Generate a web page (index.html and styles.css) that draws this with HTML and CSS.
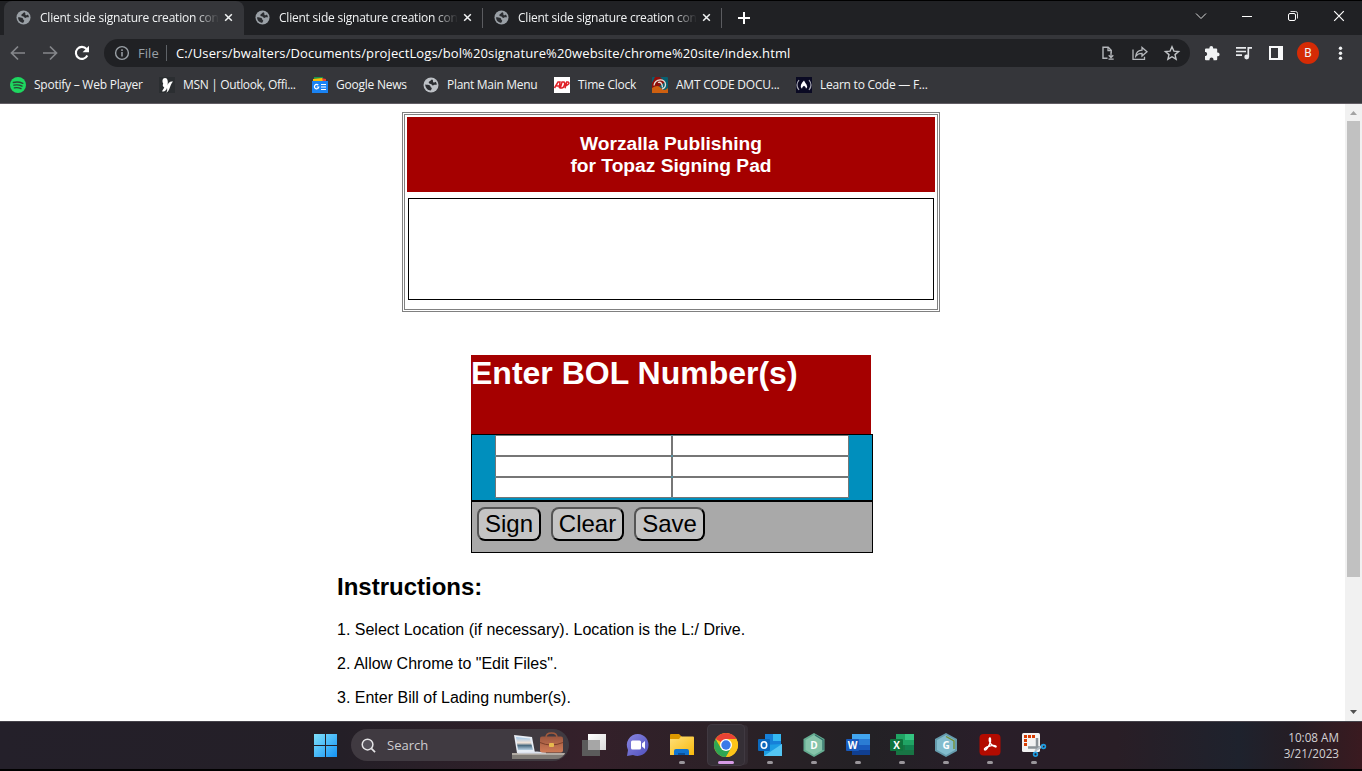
FILE: index.html
```html
<!DOCTYPE html>
<html lang="en">
<head>
<meta charset="utf-8">
<title>Client side signature creation</title>
<link rel="stylesheet" href="styles.css">
</head>
<body>
<svg class="defs" width="0" height="0">
  <defs>
    <symbol id="globe" viewBox="0 0 16 16"><circle cx="8" cy="8" r="7.500" fill="currentColor"/><path d="M9.200 2.400C7.800 2.600 7.700 3.800 6.600 4.300 5.300 4.900 5.400 6.500 6.900 6.700c1.500.1 1.700.9 2.400 1.600 1 .7 1.700-.5 2.800-.5.800 0 1.200.2 1.700-.2-.1-1.200-.5-2-1.100-2.800-.8.800-1.900 1-2.500.4-.7-.8.500-1.500-1-2.800zM2.200 7.600c1.700.2 3.700.2 4.700 1 .9.800.4 1.700 1.300 2 1.100.4.500 1.700-.5 2.900C4.700 13.400 2.300 11 2.200 7.600z" fill="#2b2d31"/></symbol>
    <symbol id="close" viewBox="0 0 10 10"><path d="M1.300 1.300l7.400 7.400M8.700 1.300L1.300 8.700" stroke="#f1f3f4" stroke-width="1.700"/></symbol>
    <linearGradient id="win" x1="0" y1="0" x2="1" y2="1"><stop offset="0" stop-color="#7fe0fb"/><stop offset="1" stop-color="#1493f5"/></linearGradient>
    <linearGradient id="folder" x1="0" y1="0" x2="1" y2="1"><stop offset="0" stop-color="#ffe07a"/><stop offset="1" stop-color="#f9b90c"/></linearGradient>
    <linearGradient id="chat" x1="0" y1="0" x2="1" y2="1"><stop offset="0" stop-color="#8a86e0"/><stop offset="1" stop-color="#4f50bd"/></linearGradient>
    <linearGradient id="bag" x1="0" y1="0" x2="0" y2="1"><stop offset="0" stop-color="#9c563e"/><stop offset="1" stop-color="#d07b57"/></linearGradient>
    <linearGradient id="screen" x1="0" y1="0" x2="0" y2="1"><stop offset="0" stop-color="#9ec5e8"/><stop offset=".45" stop-color="#f2e3d8"/><stop offset=".65" stop-color="#4a6a80"/><stop offset="1" stop-color="#b7d0e4"/></linearGradient>
    <linearGradient id="pane" x1="0" y1="0" x2="1" y2="1"><stop offset="0" stop-color="#fff"/><stop offset="1" stop-color="#dadada"/></linearGradient>
  </defs>
</svg>

<header class="browser">
  <div class="tabstrip">
    <div class="tab active"><svg class="fav"><use href="#globe"/></svg><span class="title">Client side signature creation con</span><svg class="x"><use href="#close"/></svg></div>
    <div class="tab"><svg class="fav"><use href="#globe"/></svg><span class="title">Client side signature creation con</span><svg class="x"><use href="#close"/></svg></div>
    <div class="tab"><svg class="fav"><use href="#globe"/></svg><span class="title">Client side signature creation con</span><svg class="x"><use href="#close"/></svg></div>
    <svg class="plus" viewBox="0 0 12 12"><path d="M6 0v12M0 6h12" stroke="#fff" stroke-width="2"/></svg>
    <div class="winctl">
      <svg viewBox="0 0 12 12"><path d="M1 3.500l5 5 5-5" fill="none" stroke="#ddd"/></svg>
      <svg viewBox="0 0 12 12"><path d="M1 6.500h10" stroke="#fff"/></svg>
      <svg viewBox="0 0 12 12"><rect x="1.500" y="3.500" width="7" height="7" rx="1.500" fill="none" stroke="#fff"/><path d="M3.500 1.500h5a2 2 0 0 1 2 2v5" fill="none" stroke="#ddd"/></svg>
      <svg viewBox="0 0 12 12"><path d="M1.200 1.200l9.600 9.600M10.800 1.200L1.200 10.800" stroke="#fff" stroke-width="1.200"/></svg>
    </div>
  </div>

  <div class="toolbar">
    <div class="nav">
      <svg viewBox="0 0 16 16"><path d="M15 8H2M8 1.500L1.500 8 8 14.500" fill="none" stroke="#85878b" stroke-width="1.700"/></svg>
      <svg viewBox="0 0 16 16"><path d="M1 8h13M8 1.500L14.500 8 8 14.500" fill="none" stroke="#85878b" stroke-width="1.700"/></svg>
      <svg viewBox="0 0 16 16"><path d="M13.300 10.500A6 6 0 1 1 12.500 4" fill="none" stroke="#fff" stroke-width="2.100"/><path d="M15 .8v6.400H8.600z" fill="#fff"/></svg>
    </div>
    <div class="omnibox">
      <svg class="info" viewBox="0 0 16 16"><circle cx="8" cy="8" r="6.400" fill="none" stroke="#9aa0a6" stroke-width="1.400"/><path d="M8 7v4.500M8 4.300V6" stroke="#9aa0a6" stroke-width="1.500"/></svg>
      <span class="scheme">File</span><i class="bar"></i>
      <span class="url">C:/Users/bwalters/Documents/projectLogs/bol%20signature%20website/chrome%20site/index.html</span>
      <div class="actions">
        <svg viewBox="0 0 16 16"><path d="M7.500 13.300H3V2.300h5.200l3 3v3" fill="none" stroke="#b5b8bc" stroke-width="1.400"/><path d="M8 2v3.600h3.500M11 7.500v4.200M8.700 10.200l2.300 2.300 2.300-2.300M8.500 14.200h5.200" fill="none" stroke="#b5b8bc" stroke-width="1.300"/></svg>
        <svg viewBox="0 0 16 16"><path d="M1 4.500v9.800h11.500v-2.500M10 2.500v2.600C6 5.300 4.200 7.300 3.800 11c1.500-2 3.300-2.700 6.200-2.700V11l5-4.300z" fill="none" stroke="#b5b8bc" stroke-width="1.300"/></svg>
        <svg viewBox="0 0 16 16"><path d="M8 1.800l1.900 4.300 4.700.4-3.600 3.100 1.100 4.600L8 11.700l-4.100 2.500L5 9.600 1.400 6.500l4.700-.4z" fill="none" stroke="#c1c4c7" stroke-width="1.400"/></svg>
      </div>
    </div>
    <div class="tools">
      <svg viewBox="0 0 16 16"><path d="M1 4.500Q1 3.500 2 3.500h3.400v-.6a1.900 1.900 0 0 1 3.800 0v.6h3q1 0 1 1V7.500h.5a1.900 1.900 0 0 1 0 3.800h-.5v2.900q0 1-1 1H9.500v-.8a2 2 0 0 0-4 0v.8H2q-1 0-1-1v-3.300h.8a2 2 0 0 0 0-3.800H1z" fill="#f1f3f4"/></svg>
      <svg viewBox="0 0 16 16"><path d="M0 2.800h10M0 6.500h10M0 10.200h6M12.300 12V2.800H16" fill="none" stroke="#e8eaed" stroke-width="1.700"/><circle cx="10.700" cy="12" r="2.400" fill="#e8eaed"/></svg>
      <svg viewBox="0 0 16 16"><path d="M1 1h14v14H1zM3 3v10h7V3z" fill="#f8f9fa" fill-rule="evenodd"/></svg>
      <span class="avatar">B</span>
      <svg viewBox="0 0 16 16" fill="#f1f3f4"><circle cx="8.500" cy="3.200" r="1.700"/><circle cx="8.500" cy="8.200" r="1.700"/><circle cx="8.500" cy="13.200" r="1.700"/></svg>
    </div>
  </div>

  <nav class="bookmarks">
    <a><svg viewBox="0 0 16 16"><circle cx="8" cy="8" r="8" fill="#1ed760"/><path d="M3.300 5.500q5-1.300 9.500.9M3.800 8.200q4.300-1.100 8.200.9M4.300 10.800q3.700-.8 6.700.8" fill="none" stroke="#2b4735" stroke-width="1.300" stroke-linecap="round"/></svg><span>Spotify – Web Player</span></a>
    <a><svg viewBox="0 0 16 16"><path d="M0 0h16v16H0z" fill="#2b2e31"/><path d="M8.500 8.500C9.400 4 8.600.8 6 .9 3.200 1 3 4 4.200 6.500c-1 2.200-.2 3.300 1.100 3.900L3 14.300c2.200.9 4.300-.6 5-3.300.2 1.500.5 3-.8 4.600 3.600-.6 3.300-7 6.800-11-3-.7-5.100 1.500-5.500 3.900z" fill="#fff"/></svg><span>MSN | Outlook, Offi...</span></a>
    <a><svg viewBox="0 0 16 16"><path d="M2 0h9v4H2z" fill="#18944b"/><path d="M9 1l5 1v3H8z" fill="#e94235"/><path d="M1 2l9-1 1 4H1z" fill="#fbbc04"/><path d="M0 4h16v12H0z" fill="#1a83f3"/><path d="M6.300 8.200A2.200 2.200 0 1 0 6.800 10H4.700" fill="none" stroke="#fff" stroke-width="1.200"/><path d="M9 7h5v1H9zM9 9.500h5v1H9zM9 12h5v1H9z" fill="#fff"/></svg><span>Google News</span></a>
    <a class="plain"><svg><use href="#globe"/></svg><span>Plant Main Menu</span></a>
    <a><svg viewBox="0 0 16 16"><path d="M0 0h16v16H0z" fill="#fff"/><path d="M.5 11L4 5h2l-.7 6M2.500 9H5M6.300 11L8 5h1.800q1.500.7.700 3-.8 2.800-2.500 3zM11 11.200L12.700 5h1.500q2.300 1.600-1.900 3.600" fill="none" stroke="#e02127" stroke-width="1.500"/></svg><span>Time Clock</span></a>
    <a><svg viewBox="0 0 16 16"><rect width="16" height="16" rx="1" fill="#075f70"/><path d="M0 6l3-6h5l5 5-8 6H0z" fill="#8d100b"/><path d="M0 11q6-4 9 0t7 0v5H0z" fill="#ce6010"/><path d="M2 8.500C3 1.500 13.500 1 13.500 7.500q0 3.500-3.500 4.500M6 5.500q4-1.500 4.500 5" fill="none" stroke="#e7ddd3" stroke-width="1.300"/></svg><span>AMT CODE DOCU...</span></a>
    <a><svg viewBox="0 0 16 16"><path d="M0 0h16v16H0z" fill="#0a0a23"/><path d="M3 3Q-1 8 3 13M13 3q4 5 0 10" fill="none" stroke="#aaaab5" stroke-width="1.200"/><path d="M8 3.500q1 2 2.500 4T10 11.800q0-2-2-3-2 1-2 3-2-1.500-1-4t3-4.300z" fill="#fff"/></svg><span>Learn to Code — F...</span></a>
  </nav>
</header>

<div class="viewport">
  <main class="page">
    <section class="pad">
      <h3>Worzalla Publishing<br>for Topaz Signing Pad</h3>
      <div class="canvas"></div>
    </section>
    <section class="bol">
      <h1>Enter BOL Number(s)</h1>
      <div class="fields"><input><input><input><input><input><input></div>
      <div class="buttons"><button>Sign</button><button>Clear</button><button>Save</button></div>
    </section>
    <section class="instructions">
      <h2>Instructions:</h2>
      <p>1. Select Location (if necessary). Location is the L:/ Drive.</p>
      <p>2. Allow Chrome to "Edit Files".</p>
      <p>3. Enter Bill of Lading number(s).</p>
    </section>
  </main>
  <div class="scrollbar">
    <svg viewBox="0 0 17 17"><path d="M5 11h7L8.500 7z" fill="#a3a3a3"/></svg>
    <div class="thumb"></div>
    <svg class="down" viewBox="0 0 17 17"><path d="M5 6h7L8.500 10z" fill="#505050"/></svg>
  </div>
</div>

<footer class="taskbar">
  <svg class="start" viewBox="0 0 23 23"><path d="M0 0h11v11H0zM12 0h11v11H12zM0 12h11v11H0zM12 12h11v11H12z" fill="url(#win)"/></svg>
  <div class="search">
    <svg class="glass" viewBox="0 0 16 16"><circle cx="7" cy="7" r="5.700" fill="#55515a" stroke="#e4e4e6" stroke-width="1.600"/><path d="M11 11l4 4" stroke="#e4e4e6" stroke-width="1.800"/></svg>
    <span>Search</span>
    <svg class="desk" viewBox="0 0 54 31"><path d="M0 20h53q-3 6-9 6H0z" fill="#807b76"/><path d="M0 20h53l-1 2H0z" fill="#b1aaa3"/><path d="M2 2l18 2 3 16H5z" fill="#e8edf5"/><path d="M4 4l14 1.500L21 17H6z" fill="url(#screen)"/><path d="M5 19.500l20-1 9 1v1H6z" fill="#dce1ed"/><path d="M34 4.500q0-4.500 5.500-4.500T45 4.500" fill="none" stroke="#a15a3d" stroke-width="1.500"/><rect x="28" y="3.500" width="23" height="16" rx="2" fill="url(#bag)"/><path d="M28 9.500q11 5 23 0" fill="none" stroke="#7c3f2a"/><rect x="37" y="10" width="5" height="4" rx="1" fill="#e6b94e"/></svg>
  </div>
  <div class="apps">
    <div class="app"><svg viewBox="0 0 24 24"><path d="M6 1h18v16H6z" fill="url(#pane)"/><path d="M0 7h18v16H0z" fill="#5b5b5b"/><path d="M6 7h12v10H6z" fill="#a6a6a6"/></svg></div>
    <div class="app"><svg viewBox="0 0 24 24"><path d="M12 1a11 11 0 1 1-5 21L1 23l1-6A11 11 0 0 1 12 1z" fill="url(#chat)"/><rect x="5" y="7.500" width="10" height="9" rx="1.500" fill="#fff"/><path d="M16 10.500l3-2.500v8l-3-2.500z" fill="#fff"/></svg></div>
    <div class="app run"><svg viewBox="0 0 24 24"><path d="M0 2q0-1 1-1h8l3 3-3 4H0z" fill="#dd9800"/><path d="M0 6h9l2-2.500h12q1 0 1 1V22H0z" fill="url(#folder)"/><path d="M4 22v-4q0-2 2-2h11q2 0 2 2v4z" fill="#1073cf"/><path d="M8 22v-2h7v2z" fill="#0a519a"/></svg></div>
    <div class="app run current"><svg viewBox="0 0 24 24"><circle cx="12" cy="12" r="12" fill="#fcc419"/><path d="M12 12L1.600 6A12 12 0 0 1 22.400 6z" fill="#e94335"/><path d="M1.600 6A12 12 0 0 0 12 24l5.200-9L12 12 6.800 15z" fill="#2fa653"/><path d="M12 6h10.400A12 12 0 0 1 12 24l5.200-9z" fill="#fcc419"/><circle cx="12" cy="12" r="6" fill="#fff"/><circle cx="12" cy="12" r="4.700" fill="#3b79e8"/></svg></div>
    <div class="app run"><svg viewBox="0 0 24 24"><path d="M7 1h16v13H7z" fill="#1680d8"/><path d="M15 1h8v7h-8z" fill="#35b8f1"/><path d="M6 12l18-1v12H6z" fill="#1c9de4"/><path d="M6 23l18-12v12z" fill="#54c5f3"/><rect y="6" width="12" height="12" rx="1" fill="#0b68bc"/><ellipse cx="6" cy="12" rx="2.700" ry="3.300" fill="none" stroke="#fff" stroke-width="1.600"/></svg></div>
    <div class="app run"><svg viewBox="0 0 24 24"><path d="M12 0l10.500 6v12L12 24 1.500 18V6z" fill="#65ac91"/><path d="M12 2l8.500 5v10L12 22 3.500 17V7z" fill="#86c4aa"/><path d="M13 2l8 5v10" fill="none" stroke="#35706c" stroke-width="1.200"/><text x="12" y="16" text-anchor="middle">D</text></svg></div>
    <div class="app run"><svg viewBox="0 0 24 24"><path d="M6 1h18v6H6z" fill="#42a5ee"/><path d="M6 6h18v6H6z" fill="#2b7cd4"/><path d="M6 12h18v5H6z" fill="#195abd"/><path d="M6 17h18v5H6z" fill="#103f91"/><rect y="6" width="13" height="12" rx="1" fill="#185abd"/><text x="6.500" y="15.700" text-anchor="middle">W</text></svg></div>
    <div class="app run"><svg viewBox="0 0 24 24"><path d="M6 1h18v21H6z" fill="#20a464"/><path d="M15 1h9v6h-9z" fill="#34c481"/><path d="M6 12h18v10H6z" fill="#187544"/><path d="M15 12h9v5h-9z" fill="#128250"/><rect y="6" width="13" height="12" rx="1" fill="#0f743d"/><text x="6.500" y="15.700" text-anchor="middle">X</text></svg></div>
    <div class="app run"><svg viewBox="0 0 24 24"><path d="M12 0l11 6v12l-11 6-11-6V6z" fill="#659bac"/><path d="M12 2l9 5v10l-9 5-9-5V7z" fill="#83bccd"/><path d="M12 3.500l8 4.500v8" fill="none" stroke="#758f37" stroke-width="1.400"/><text x="12" y="16" text-anchor="middle">G</text></svg></div>
    <div class="app run"><svg viewBox="0 0 24 24"><rect x="1.500" y="1" width="21" height="21.500" rx="4" fill="#b30b00"/><path d="M6.500 16.500c-1-2 9-5.500 11.500-3.300 1.400 2.300-7.500-1-6.700-7.500.8-2.200 2.300 1.200.2 5.500s-4 6.800-5 5.300z" fill="none" stroke="#fff" stroke-width="1.400"/></svg></div>
    <div class="app run"><svg viewBox="0 0 24 24"><rect width="18" height="19" rx="1.500" fill="#f2f2f2"/><path d="M2 2h3v3H2zM6 2h3v3H6zM10 2h3v3h-3zM2 6h3v3H2zM2 10h3v3H2z" fill="#d83b01"/><path d="M15 5v12M6 14.500h13" stroke="#8b9297" stroke-width="2.500"/><path d="M13 18l8-6" stroke="#b5bec5" stroke-width="2"/><circle cx="21.500" cy="13.500" r="1.900" fill="none" stroke="#1d9de2" stroke-width="1.600"/><circle cx="13.500" cy="21.300" r="1.900" fill="none" stroke="#1d9de2" stroke-width="1.600"/></svg></div>
  </div>
  <div class="clock"><span>10:08 AM</span><span>3/21/2023</span></div>
</footer>
</body>
</html>
```
FILE: styles.css
```css
* { box-sizing: border-box; }
html, body { margin: 0; height: 771px; overflow: hidden; }
body { display: flex; flex-direction: column; background: #000; font-family: "Open Sans", "Noto Sans", sans-serif; }
svg { display: block; flex: none; overflow: visible; }
.defs { position: absolute; }

.browser { height: 104px; background: #35363a; border-top: 1px solid #000; border-bottom: 1px solid #625d64; color: #f1f3f4; flex: none; }
.tabstrip { height: 34px; background: #202124; display: flex; align-items: center; padding-left: 4px; }
.tab { width: 239px; height: 34px; display: flex; align-items: center; padding: 0 0 1px 11px; }
.tab + .tab { background: linear-gradient(#5b5c60, #5b5c60) no-repeat right 7px / 1px 20px; }
.tab.active { background: #35363a; border-radius: 8px 8px 0 0; width: 240px; padding-left: 12px; }
.tab.active + .tab { margin-left: -1px; width: 240px; padding-left: 12px; }
.fav { width: 15px; height: 15px; color: #9aa0a6; }
.title { width: 180px; margin-left: 9px; white-space: nowrap; font-size: 12px; letter-spacing: -.22px; -webkit-mask-image: linear-gradient(90deg, #000 155px, transparent 179px); mask-image: linear-gradient(90deg, #000 155px, transparent 179px); }
.x { width: 9px; height: 9px; margin-left: 4px; }
.plus { width: 12px; height: 12px; margin-left: 16px; }
.winctl { margin-left: auto; display: flex; gap: 34px; padding: 0 17px 5px 0; }
.winctl svg { width: 12px; height: 12px; }

.toolbar { height: 36px; display: flex; align-items: center; padding: 0 13px 0 10px; }
.nav { display: flex; gap: 16px; width: 94px; }
.nav svg { width: 16px; height: 16px; }
.omnibox { width: 1086px; height: 28px; border-radius: 14px; background: #202124; display: flex; align-items: center; padding: 0 10px; }
.info { width: 16px; height: 16px; }
.scheme { margin-left: 8px; font-size: 13px; color: #9aa0a6; width: 21px; letter-spacing: .05px; }
.bar { width: 1px; height: 16px; background: #5f6368; margin: 0 9px 0 7px; }
.url { font-size: 13px; white-space: nowrap; letter-spacing: .12px; color: #fff; }
.actions { margin-left: auto; display: flex; gap: 16px; }
.actions svg, .tools svg { width: 16px; height: 16px; }
.tools { display: flex; align-items: center; margin-left: 14px; gap: 16px; }
.avatar { width: 22px; height: 22px; margin: 0 -3px; border-radius: 50%; background: #d52b05; font: 12px/22px Roboto, sans-serif; text-align: center; }

.bookmarks { height: 28px; display: flex; padding: 0 0 1px 10px; }
.bookmarks a { display: flex; align-items: center; gap: 8px; width: 149px; font-size: 12px; white-space: nowrap; letter-spacing: -.24px; }
.bookmarks svg { width: 16px; height: 16px; }
.bookmarks .plain { color: #bdc1c6; width: 131px; }
.plain span { color: #f1f3f4; }
.bookmarks a:nth-child(2) { width: 153px; letter-spacing: -.34px; }
.bookmarks a:nth-child(3) { width: 111px; }
.bookmarks a:nth-child(4) { letter-spacing: -.3px; }
.bookmarks a:nth-child(5) { width: 98px; }
.bookmarks a:nth-child(6) { width: 144px; }

.viewport { height: 617px; flex: none; background: #fff; display: flex; overflow: hidden; font-family: "Liberation Sans", Arial, sans-serif; color: #000; }
.page { width: 1345px; padding-top: 8px; }
.pad { width: 538px; height: 200px; margin-left: 402px; border: 3px double #808080; padding: 2px; }
.pad h3 { margin: 0; height: 75px; padding-top: 16px; background: #a50000; color: #fff; font-size: 19.2px; line-height: 22px; text-align: center; }
.canvas { height: 102px; margin: 6px 1px 0; border: 1px solid #000; }
.bol { width: 402px; margin: 43px 0 0 471px; }
.bol h1 { margin: 0 2px 0 0; height: 79px; background: #a50000; color: #fff; font-size: 32px; line-height: 36px; white-space: nowrap; }
.fields { height: 67px; border: 1px solid #000; background: #008fbd; display: grid; grid-template-columns: 177px 177px; grid-auto-rows: 21px; padding-left: 23px; }
.fields input { width: 177px; height: 21px; border: 1px solid #767676; border-radius: 1px; background: #fff; padding: 0; }
.buttons { height: 52px; border: 1px solid #000; background: #a9a9a9; display: flex; gap: 10px; padding: 5px; }
.buttons button { height: 34px; width: 64px; padding: 0; border: 2px solid; border-color: #555 #000 #000 #555; border-radius: 8px; background: #c4c4c4; color: #000; font: 24px/28px "Liberation Sans", Arial, sans-serif; }
.buttons button:nth-child(2) { width: 73px; }
.buttons button:nth-child(3) { width: 71px; }
.instructions { margin: 20px 0 0 337px; }
.instructions h2 { margin: 0 0 20px; font-size: 24px; line-height: 28px; }
.instructions p { margin: 0 0 16px; font-size: 16px; line-height: 18px; }
.scrollbar { width: 17px; background: #f1f1f1; display: flex; flex-direction: column; align-items: center; }
.scrollbar svg { width: 17px; height: 17px; }
.thumb { width: 13px; height: 456px; background: #c1c1c1; }
.scrollbar .down { margin-top: auto; }

.taskbar { height: 48px; flex: none; border-top: 1px solid #45424a; background: linear-gradient(90deg, #24202a 0, #241f27 25%, #34202a 43%, #2c2127 53%, #232125 64%, #291e29 72%, #291e26 82%, #1e222d 91%, #251d24 95%, #3a1a20 100%); display: flex; align-items: center; padding: 0 0 1px 314px; }
.start { width: 23px; height: 23px; }
.search { width: 218px; height: 32px; margin-left: 14px; border-radius: 16px; background: #403a41; display: flex; align-items: center; padding-left: 10px; font-size: 13px; color: #cfcdd0; }
.glass { width: 15px; height: 15px; }
.search span { width: 125px; margin-left: 11px; }
.desk { width: 54px; height: 31px; margin-top: 7px; }
.apps { display: flex; margin-left: 3px; }
.app { width: 44px; height: 40px; padding-top: 8px; display: flex; flex-direction: column; align-items: center; }
.app svg { width: 24px; height: 24px; }
.app text { font: bold 10px "Open Sans", sans-serif; fill: #fff; }
.run::after { content: ""; width: 6px; height: 3px; margin-top: 4px; border-radius: 2px; background: #9a969b; flex: none; }
.current { width: 36px; margin: 0 4px; background: #352f36; border-radius: 4px; box-shadow: 0 0 0 1px #403941, 4px 0 0 0 #342c33; }
.current::after { width: 16px; background: #d69be6; }
.clock { margin-left: auto; padding: 0 23px 1px 0; display: flex; flex-direction: column; align-items: flex-end; font-size: 11.7px; line-height: 16px; color: #d3d1d4; }
```
